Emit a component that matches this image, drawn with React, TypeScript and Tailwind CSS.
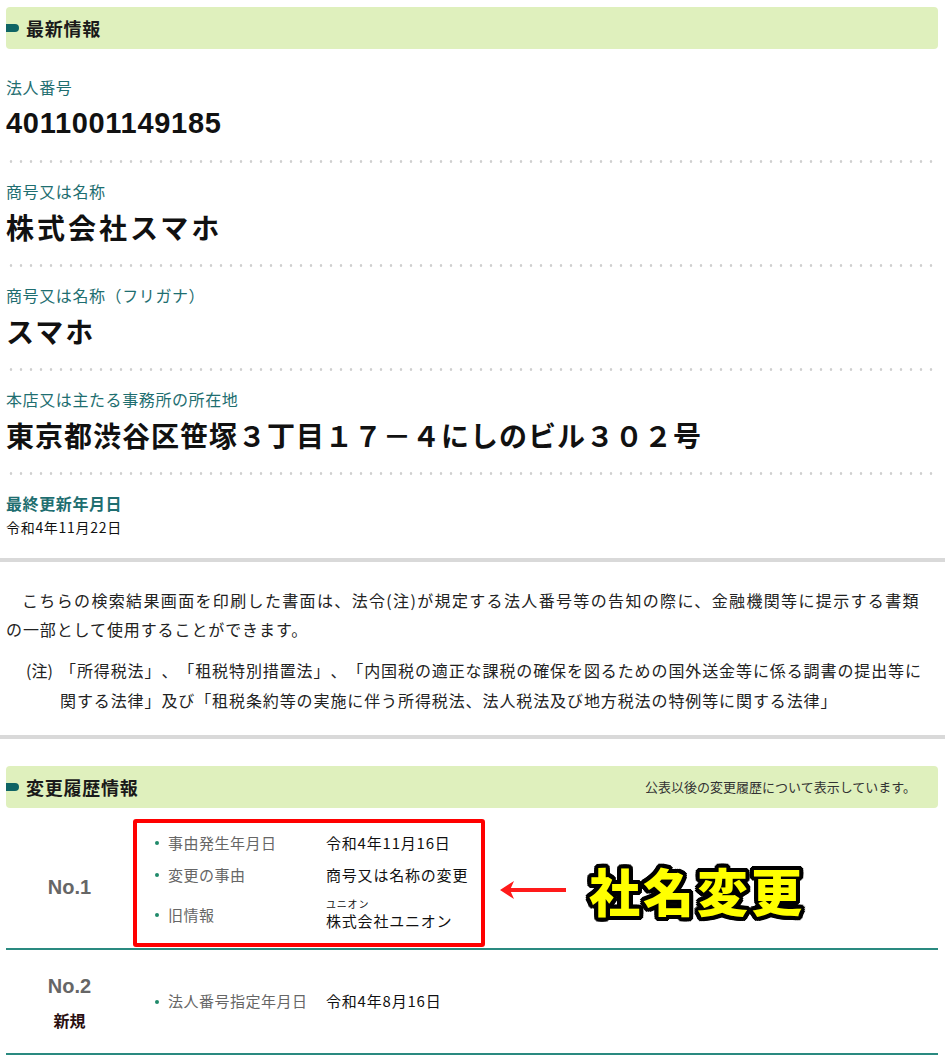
import React from 'react';

const jp = "font-['Noto_Sans_CJK_JP','Liberation_Sans',sans-serif]";

function SectionHeader({ title, note }: { title: string; note?: string }) {
  return (
    <div className="mx-[6px] w-[932px] h-[42px] rounded-[4px] bg-[#dff0bd] flex items-center">
      <span className="w-[13px] h-[8px] rounded-r-full bg-[#0f6464]" />
      <span className="ml-[7px] text-[18px] font-bold tracking-[0.75px] text-[#1a1a1a]">{title}</span>
      {note && <span className="ml-auto mr-[22px] text-[13px] text-[#333]">{note}</span>}
    </div>
  );
}

function Dots() {
  return (
    <div className="h-[3px] bg-[radial-gradient(circle,#cfcfcf_1px,transparent_1.6px)] bg-[length:10px_3px] bg-repeat-x" />
  );
}

function Item({ label, value, cls, first }: { label: string; value: string; cls: string; first?: boolean }) {
  return (
    <>
      <div className={`${first ? 'pt-[28px]' : 'pt-[18px]'} pb-[17px]`}>
        <div className="h-[21px] leading-[21px] text-[16px] tracking-[0.6px] text-[#1e6e70]">{label}</div>
        <div className={`mt-[5px] h-[40px] leading-[40px] font-bold text-[#111] whitespace-nowrap ${cls}`}>{value}</div>
      </div>
      <Dots />
    </>
  );
}

function HistItem({ label, children, tall }: { label: string; children: React.ReactNode; tall?: boolean }) {
  return (
    <div className={`flex items-center ${tall ? 'h-[48px]' : 'h-[32px]'}`}>
      <div className="w-[189px] shrink-0 pl-[18px] flex items-center">
        <span className="w-[4px] h-[4px] rounded-full bg-[#1f8a6a]" />
        <span className="ml-[9px] text-[15px] tracking-[0.5px] text-[#666]">{label}</span>
      </div>
      <div className="text-[15px] tracking-[0.8px] text-[#111]">{children}</div>
    </div>
  );
}

export default function App() {
  return (
    <div className={`w-[945px] min-h-[1061px] bg-white ${jp} text-[#111]`}>
      <div className="pt-[7px]">
        <SectionHeader title="最新情報" />
      </div>

      {/* 最新情報 */}
      <div className="px-[6px] w-[944px]">
        <Item
          first
          label="法人番号"
          value="4011001149185"
          cls="font-['Liberation_Sans',sans-serif] text-[29px] tracking-[0.7px]"
        />
        <Item label="商号又は名称" value="株式会社スマホ" cls="text-[28px] tracking-[3px]" />
        <Item label="商号又は名称（フリガナ）" value="スマホ" cls="text-[28px] tracking-[2px]" />
        <Item
          label="本店又は主たる事務所の所在地"
          value="東京都渋谷区笹塚３丁目１７－４にしのビル３０２号"
          cls="text-[28px] tracking-[1px]"
        />
        <div className="pt-[18px] pb-[21px]">
          <div className="h-[21px] leading-[21px] text-[16px] tracking-[0.6px] text-[#1e6e70] font-bold">最終更新年月日</div>
          <div className="mt-[3px] h-[20px] leading-[20px] text-[14px] tracking-[0.7px]">令和4年11月22日</div>
        </div>
      </div>

      <div className="h-1 bg-[#d9d9d9]" />

      {/* 注意書き */}
      <div className="pt-[24px] pb-[20px] px-[6px] text-[16px] tracking-[0.9px] text-[#222] [text-spacing-trim:space-all]">
        <p className="leading-[29px]">
          <span className="block whitespace-nowrap pl-[16px] tracking-[1.35px]">
            こちらの検索結果画面を印刷した書面は、法令(注)が規定する法人番号等の告知の際に、金融機関等に提示する書類
          </span>
          <span className="block whitespace-nowrap">の一部として使用することができます。</span>
        </p>
        <div className="mt-[11px] flex leading-[30px]">
          <span className="pl-[20px] w-[54px] shrink-0 whitespace-nowrap tracking-normal">(注)</span>
          <div>
            <span className="block whitespace-nowrap">
              「所得税法」、「租税特別措置法」、「内国税の適正な課税の確保を図るための国外送金等に係る調書の提出等に
            </span>
            <span className="block whitespace-nowrap">
              関する法律」及び「租税条約等の実施に伴う所得税法、法人税法及び地方税法の特例等に関する法律」
            </span>
          </div>
        </div>
      </div>

      <div className="h-1 bg-[#d9d9d9]" />

      {/* 変更履歴情報 */}
      <div className="pt-[27px]">
        <SectionHeader title="変更履歴情報" note="公表以後の変更履歴について表示しています。" />
        <div className="mx-[6px] w-[932px]">
          <div className="flex items-center pt-[11px] pb-[1px] border-b-2 border-[#2a8a80]">
            <div className="w-[127px] shrink-0 pt-2 text-center font-['Liberation_Sans',sans-serif] text-[20px] font-bold text-[#666]">
              No.1
            </div>
            <div className="w-[352px] shrink-0 border-4 border-[#ff0000] rounded-[3px] pt-1 pb-1">
              <HistItem label="事由発生年月日">令和4年11月16日</HistItem>
              <HistItem label="変更の事由">商号又は名称の変更</HistItem>
              <HistItem label="旧情報" tall>
                <div className="text-[10px] leading-[12px]">ユニオン</div>
                <div className="leading-[22px]">株式会社ユニオン</div>
              </HistItem>
            </div>
            <div className="flex items-center self-center pt-[14px]">
              <svg width="66" height="20" viewBox="0 0 66 20" className="ml-[15px]">
                <line x1="8" y1="10" x2="66" y2="10" stroke="#ff1a1a" strokeWidth="4" />
                <polygon points="0,10 14,1 10,10 14,19" fill="#ff1a1a" />
              </svg>
              <span className="ml-[23px] text-[51px] leading-[60px] font-black tracking-[3px] text-[#ffff00] [text-shadow:4px_0_0_#000,-4px_0_0_#000,0_4px_0_#000,0_-4px_0_#000,3px_3px_0_#000,-3px_3px_0_#000,3px_-3px_0_#000,-3px_-3px_0_#000,4px_2px_0_#000,-4px_2px_0_#000,4px_-2px_0_#000,-4px_-2px_0_#000,2px_4px_0_#000,-2px_4px_0_#000,2px_-4px_0_#000,-2px_-4px_0_#000]">
                社名変更
              </span>
            </div>
          </div>

          <div className="flex items-center h-[105px] border-b-2 border-[#2a8a80]">
            <div className="w-[127px] shrink-0 flex flex-col items-center">
              <span className="font-['Liberation_Sans',sans-serif] text-[20px] leading-[28px] font-bold text-[#666]">No.2</span>
              <span className="mt-[8px] text-[16px] leading-[24px] font-bold text-[#2a1010]">新規</span>
            </div>
            <div className="w-[352px] shrink-0 border-4 border-transparent">
              <HistItem label="法人番号指定年月日">令和4年8月16日</HistItem>
            </div>
          </div>
        </div>
      </div>
    </div>
  );
}
